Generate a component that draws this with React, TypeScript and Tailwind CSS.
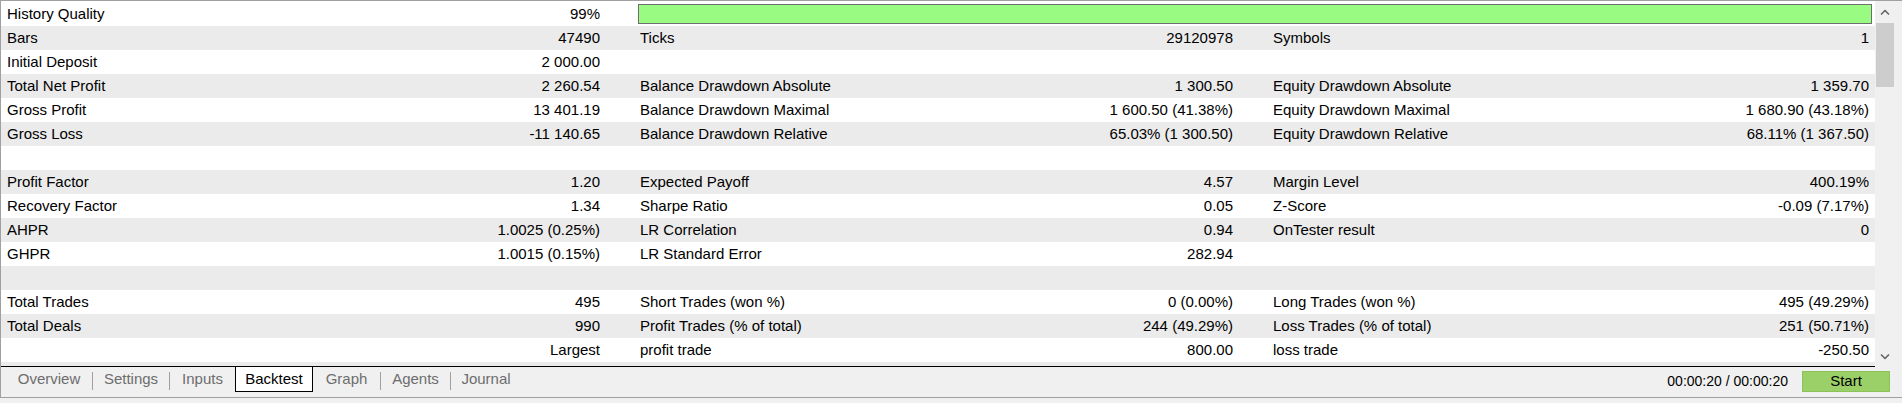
import React from "react";

type Row = [string, string, string, string, string, string] | "bar" | "empty";

const rows: Row[] = [
  "bar",
  ["Bars", "47490", "Ticks", "29120978", "Symbols", "1"],
  ["Initial Deposit", "2 000.00", "", "", "", ""],
  ["Total Net Profit", "2 260.54", "Balance Drawdown Absolute", "1 300.50", "Equity Drawdown Absolute", "1 359.70"],
  ["Gross Profit", "13 401.19", "Balance Drawdown Maximal", "1 600.50 (41.38%)", "Equity Drawdown Maximal", "1 680.90 (43.18%)"],
  ["Gross Loss", "-11 140.65", "Balance Drawdown Relative", "65.03% (1 300.50)", "Equity Drawdown Relative", "68.11% (1 367.50)"],
  "empty",
  ["Profit Factor", "1.20", "Expected Payoff", "4.57", "Margin Level", "400.19%"],
  ["Recovery Factor", "1.34", "Sharpe Ratio", "0.05", "Z-Score", "-0.09 (7.17%)"],
  ["AHPR", "1.0025 (0.25%)", "LR Correlation", "0.94", "OnTester result", "0"],
  ["GHPR", "1.0015 (0.15%)", "LR Standard Error", "282.94", "", ""],
  "empty",
  ["Total Trades", "495", "Short Trades (won %)", "0 (0.00%)", "Long Trades (won %)", "495 (49.29%)"],
  ["Total Deals", "990", "Profit Trades (% of total)", "244 (49.29%)", "Loss Trades (% of total)", "251 (50.71%)"],
  ["", "Largest", "profit trade", "800.00", "loss trade", "-250.50"],
  "empty",
];

function Chevron({ up }: { up: boolean }) {
  return (
    <svg width="10" height="7" viewBox="0 0 10 7">
      <polyline
        points={up ? "1,5.5 5,1.5 9,5.5" : "1,1.5 5,5.5 9,1.5"}
        fill="none"
        stroke="#606060"
        strokeWidth="1.5"
      />
    </svg>
  );
}

function DataRow({ row, idx }: { row: Row; idx: number }) {
  const bg = idx % 2 === 0 ? "bg-white" : "bg-[#ebebeb]";
  if (row === "bar") {
    return (
      <div className={`flex h-[24px] shrink-0 ${bg}`}>
        <div className="w-[633px] flex justify-between pl-[6px] pr-[34px] leading-[24px] whitespace-nowrap">
          <span>History Quality</span>
          <span>99%</span>
        </div>
        <div className="flex-1 flex items-center ml-[4px] mr-[3px]">
          <div className="w-full h-[20px] bg-[#99fb81] border border-[#6e6e6e]" />
        </div>
      </div>
    );
  }
  if (row === "empty") {
    return <div className={`h-[24px] shrink-0 ${bg}`} />;
  }
  return (
    <div className={`flex h-[24px] shrink-0 leading-[24px] whitespace-nowrap ${bg}`}>
      <div className="w-[633px] flex justify-between pl-[6px] pr-[34px]">
        <span>{row[0]}</span>
        <span>{row[1]}</span>
      </div>
      <div className="w-[633px] flex justify-between pl-[6px] pr-[34px]">
        <span>{row[2]}</span>
        <span>{row[3]}</span>
      </div>
      <div className="w-[608px] flex justify-between pl-[6px] pr-[6px]">
        <span>{row[4]}</span>
        <span>{row[5]}</span>
      </div>
    </div>
  );
}

const tabs: { name: string; w: string; sel?: boolean; sep?: boolean }[] = [
  { name: "Overview", w: "w-[86px]", sep: true },
  { name: "Settings", w: "w-[76px]", sep: true },
  { name: "Inputs", w: "w-[65px]" },
  { name: "Backtest", w: "w-[78px]", sel: true },
  { name: "Graph", w: "w-[67px]", sep: true },
  { name: "Agents", w: "w-[69px]", sep: true },
  { name: "Journal", w: "w-[70px]" },
];

export default function App() {
  return (
    <div className="w-[1902px] h-[403px] bg-[#f0f0f0] flex flex-col overflow-hidden text-[15px] text-black font-['Liberation_Sans',Arial,sans-serif]">
      <div className="flex flex-col border-l border-[#a0a0a0]">
        <div className="flex h-[367px] border-t border-[#a0a0a0]">
          <div className="w-[1874px] flex flex-col bg-white overflow-hidden border-b border-black">
            <div className="h-px shrink-0" />
            {rows.map((r, i) => (
              <DataRow key={i} row={r} idx={i} />
            ))}
          </div>
          <div className="w-[27px] flex flex-col pl-[1px]">
            <div className="w-[18px] h-[22px] flex items-center justify-center">
              <Chevron up />
            </div>
            <div className="w-[18px] h-[64px] bg-[#cdcdcd]" />
            <div className="flex-1" />
            <div className="w-[18px] h-[22px] flex items-center justify-center">
              <Chevron up={false} />
            </div>
          </div>
        </div>
        <div className="h-[30px] flex items-start pl-[5px]">
          {tabs.map((t) => (
            <React.Fragment key={t.name}>
              {t.sel ? (
                <div
                  className={`${t.w} h-[25px] bg-white border-l border-r border-b border-black flex items-center justify-center text-black`}
                >
                  {t.name}
                </div>
              ) : (
                <div className={`${t.w} h-[25px] flex items-center justify-center text-[#6d6d6d]`}>
                  {t.name}
                </div>
              )}
              {t.sep && <div className="w-px h-[18px] mt-[5px] bg-[#a0a0a0]" />}
            </React.Fragment>
          ))}
          <div className="ml-auto flex items-center h-[25px] mt-[2px]">
            <span className="mr-[14px] whitespace-nowrap text-[14px]">00:00:20 / 00:00:20</span>
            <div className="w-[88px] h-[21px] bg-[#9bcf68] border border-[#8cc25a] flex items-center justify-center mr-[12px]">
              Start
            </div>
          </div>
        </div>
      </div>
      <div className="h-px bg-[#a0a0a0]" />
    </div>
  );
}
